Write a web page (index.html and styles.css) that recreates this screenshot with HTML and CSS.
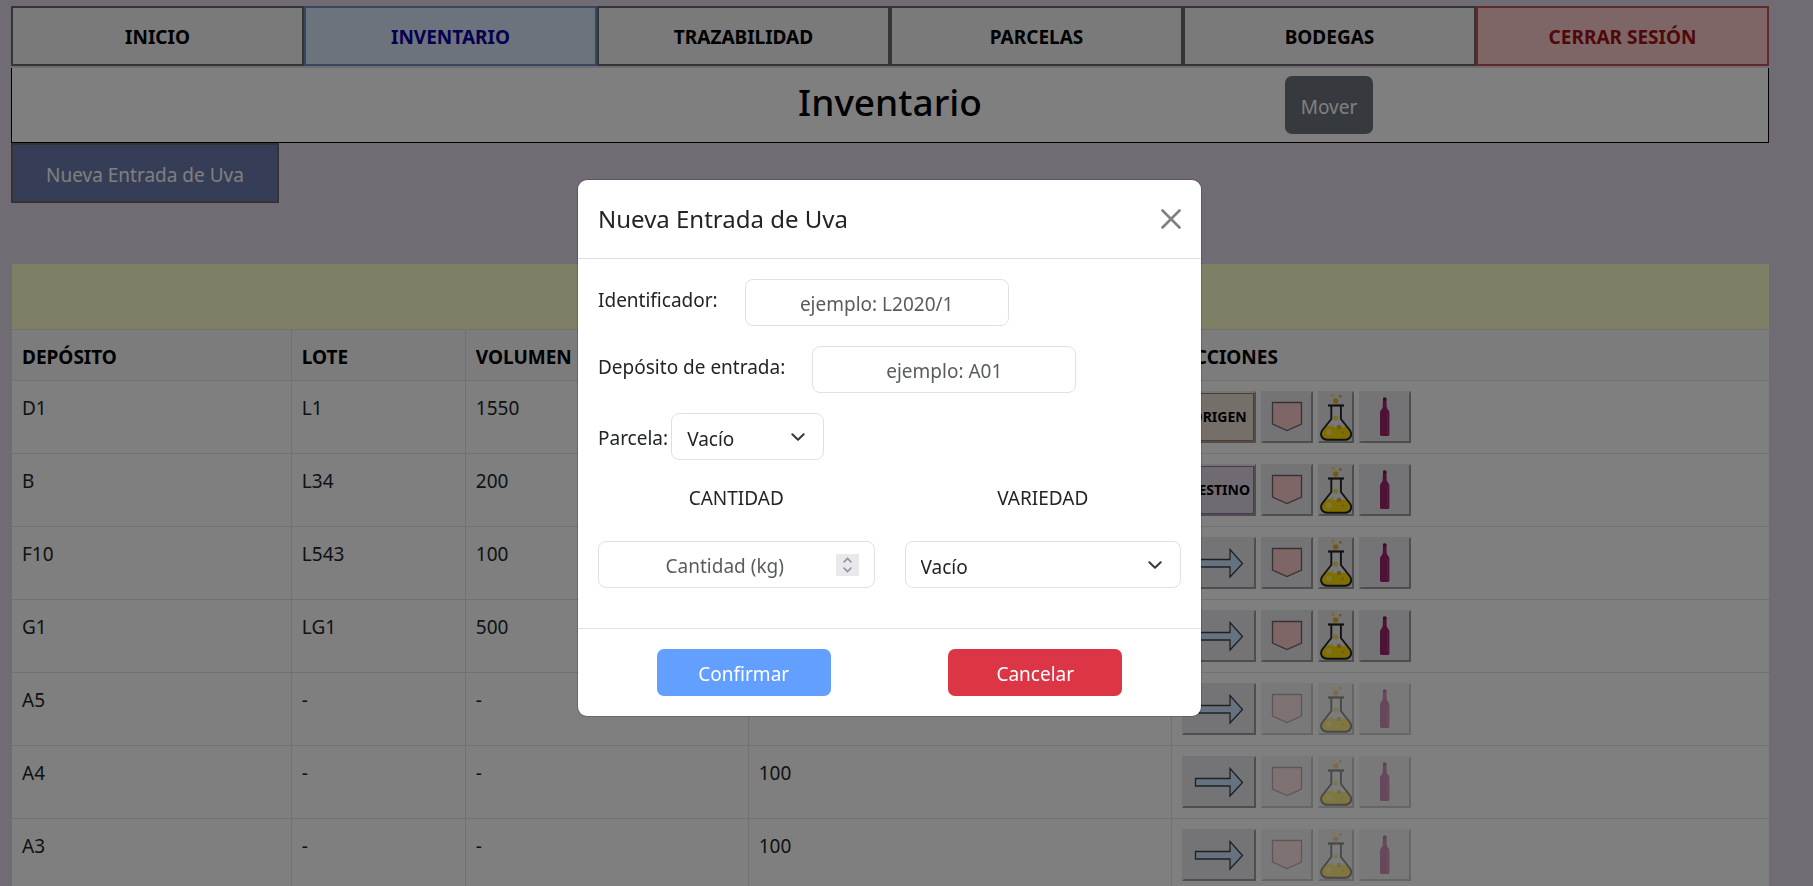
FILE: index.html
```html
<!DOCTYPE html>
<html lang="es">
<head>
<meta charset="utf-8">
<title>Inventario</title>
<link rel="stylesheet" href="styles.css">
</head>
<body>
<svg class="sprite" aria-hidden="true">
  <symbol id="arrow" viewBox="0 0 70 48">
    <path d="M11.500 20.500H46V10.500L58.500 24.500 46 38V28H11.500Z" fill="#cce5ff" stroke="#3c4248" stroke-width="1.300"/>
  </symbol>
  <symbol id="plot" viewBox="0 0 48 48">
    <path d="M9.500 9.500H38.500V31L24 37.500 9.500 31Z" fill="#ffcccc" stroke="#6e6668" stroke-width="1.300"/>
  </symbol>
  <symbol id="flask" viewBox="0 0 32 48">
    <path d="M11.700 13V26L2.600 37.500C0 42 2.500 46.700 7 46.700H25.500C30 46.700 32.300 42 29.700 37.500L20.600 26V13" fill="#f2f2f5"/>
    <path d="M5 34.500Q9 31.500 13 33.500T19.500 34.500 27.500 34L29.700 37.500C32 42 30 46.300 25.500 46.300H7C2.500 46.300 0 42 2.600 37.500Z" fill="#ffdf00"/>
    <circle cx="13" cy="2.300" r="2" fill="#f2e263"/>
    <circle cx="20.300" cy="3.300" r="1.500" fill="#f0b030"/>
    <circle cx="15.700" cy="8" r="2.700" fill="#efae28"/>
    <circle cx="15.700" cy="25" r="2.600" fill="#eedf58"/>
    <circle cx="12.300" cy="32.500" r="1.500" fill="#f3e880"/>
    <circle cx="19" cy="34" r="2.300" fill="#e8a83a"/>
    <circle cx="9" cy="39.300" r="2.900" fill="#ffef62"/>
    <circle cx="22.700" cy="39.700" r="1.100" fill="#e2ac20"/>
    <path d="M8 12.500H24" stroke="#242424" stroke-width="2.200"/>
    <path d="M11.300 13V26L2.200 37.500C-.6 42 2.200 46.700 7 46.700H25.500C30 46.700 32.800 42 30 37.500L20.900 26V13" fill="none" stroke="#242424" stroke-width="1.900"/>
  </symbol>
  <symbol id="bottle" viewBox="0 0 48 48">
    <path d="M22 5.300Q22 4.600 23.700 4.600T25.400 5.300L25.700 14C25.900 16.500 28.400 17 28.400 19.500V41.500Q28.400 43 26.500 43H21Q19 43 19 41.500V19.500C19 17 21.500 16.500 21.700 14Z" fill="#9e246e"/>
    <path d="M22 5.300Q22 4.600 23.700 4.600T25.400 5.300V7.500H22Z" fill="#6c1a4a"/>
    <path d="M26.700 20V41" stroke="#b04a88" stroke-width=".8"/>
  </symbol>
</svg>

<div class="page">
  <nav class="nav">
    <a class="nav-item" href="#inicio">INICIO</a>
    <a class="nav-item nav-active" href="#inventario">INVENTARIO</a>
    <a class="nav-item" href="#trazabilidad">TRAZABILIDAD</a>
    <a class="nav-item" href="#parcelas">PARCELAS</a>
    <a class="nav-item" href="#bodegas">BODEGAS</a>
    <a class="nav-item nav-exit" href="#salir">CERRAR SESIÓN</a>
  </nav>
  <header class="titlebar">
    <h1 class="title">Inventario</h1>
    <button class="move" type="button">Mover</button>
  </header>
  <button class="new-entry" type="button">Nueva Entrada de Uva</button>

  <div class="stock-wrap">
  <table class="stock">
    <colgroup><col class="c1"><col class="c2"><col class="c3"><col class="c4"><col class="c5"></colgroup>
    <thead>
      <tr class="band"><td colspan="5"></td></tr>
      <tr><th>DEPÓSITO</th><th>LOTE</th><th>VOLUMEN</th><th></th><th>ACCIONES</th></tr>
    </thead>
    <tbody>
      <tr><td>D1</td><td>L1</td><td>1550</td><td></td><td class="cell-actions"><div class="actions"><button class="act wide origin" type="button">ORIGEN</button><button class="act" type="button" aria-label="Parcela"><svg><use href="#plot"/></svg></button><button class="act slim" type="button" aria-label="Análisis"><svg><use href="#flask"/></svg></button><button class="act" type="button" aria-label="Embotellar"><svg><use href="#bottle"/></svg></button></div></td></tr>
      <tr><td>B</td><td>L34</td><td>200</td><td></td><td class="cell-actions"><div class="actions"><button class="act wide target" type="button">DESTINO</button><button class="act" type="button" aria-label="Parcela"><svg><use href="#plot"/></svg></button><button class="act slim" type="button" aria-label="Análisis"><svg><use href="#flask"/></svg></button><button class="act" type="button" aria-label="Embotellar"><svg><use href="#bottle"/></svg></button></div></td></tr>
      <tr><td>F10</td><td>L543</td><td>100</td><td></td><td class="cell-actions"><div class="actions"><button class="act wide" type="button" aria-label="Mover"><svg><use href="#arrow"/></svg></button><button class="act" type="button" aria-label="Parcela"><svg><use href="#plot"/></svg></button><button class="act slim" type="button" aria-label="Análisis"><svg><use href="#flask"/></svg></button><button class="act" type="button" aria-label="Embotellar"><svg><use href="#bottle"/></svg></button></div></td></tr>
      <tr><td>G1</td><td>LG1</td><td>500</td><td></td><td class="cell-actions"><div class="actions"><button class="act wide" type="button" aria-label="Mover"><svg><use href="#arrow"/></svg></button><button class="act" type="button" aria-label="Parcela"><svg><use href="#plot"/></svg></button><button class="act slim" type="button" aria-label="Análisis"><svg><use href="#flask"/></svg></button><button class="act" type="button" aria-label="Embotellar"><svg><use href="#bottle"/></svg></button></div></td></tr>
      <tr><td>A5</td><td>-</td><td>-</td><td></td><td class="cell-actions"><div class="actions"><button class="act wide" type="button" aria-label="Mover"><svg><use href="#arrow"/></svg></button><button class="act" type="button" disabled aria-label="Parcela"><svg><use href="#plot"/></svg></button><button class="act slim" type="button" disabled aria-label="Análisis"><svg><use href="#flask"/></svg></button><button class="act" type="button" disabled aria-label="Embotellar"><svg><use href="#bottle"/></svg></button></div></td></tr>
      <tr><td>A4</td><td>-</td><td>-</td><td>100</td><td class="cell-actions"><div class="actions"><button class="act wide" type="button" aria-label="Mover"><svg><use href="#arrow"/></svg></button><button class="act" type="button" disabled aria-label="Parcela"><svg><use href="#plot"/></svg></button><button class="act slim" type="button" disabled aria-label="Análisis"><svg><use href="#flask"/></svg></button><button class="act" type="button" disabled aria-label="Embotellar"><svg><use href="#bottle"/></svg></button></div></td></tr>
      <tr><td>A3</td><td>-</td><td>-</td><td>100</td><td class="cell-actions"><div class="actions"><button class="act wide" type="button" aria-label="Mover"><svg><use href="#arrow"/></svg></button><button class="act" type="button" disabled aria-label="Parcela"><svg><use href="#plot"/></svg></button><button class="act slim" type="button" disabled aria-label="Análisis"><svg><use href="#flask"/></svg></button><button class="act" type="button" disabled aria-label="Embotellar"><svg><use href="#bottle"/></svg></button></div></td></tr>
    </tbody>
  </table>
  </div>
</div>

<div class="backdrop">
  <form class="modal" role="dialog" aria-modal="true" aria-labelledby="modal-title">
    <div class="modal-head">
      <h2 class="modal-title" id="modal-title">Nueva Entrada de Uva</h2>
      <button class="close" type="button" aria-label="Cerrar"><svg viewBox="0 0 20 20"><path d="M1.500 1.500 18.500 18.500M18.500 1.500 1.500 18.500" fill="none" stroke="#808080" stroke-width="2.600" stroke-linecap="round"/></svg></button>
    </div>
    <div class="modal-body">
      <div class="field">
        <label for="ident">Identificador:</label>
        <input class="control text" id="ident" type="text" placeholder="ejemplo: L2020/1">
      </div>
      <div class="field">
        <label for="depo">Depósito de entrada:</label>
        <input class="control text" id="depo" type="text" placeholder="ejemplo: A01">
      </div>
      <div class="field field-tight">
        <label for="parcela">Parcela:</label>
        <div class="pick pick-small">
          <select class="control" id="parcela"><option>Vacío</option></select>
          <svg class="chevron" viewBox="0 0 14 8"><path d="M1.300 1.200 7 6.800 12.700 1.200" fill="none" stroke="#343a40" stroke-width="2" stroke-linecap="round" stroke-linejoin="round"/></svg>
        </div>
      </div>
      <div class="pair">
        <label for="cantidad">CANTIDAD</label>
        <label for="variedad">VARIEDAD</label>
        <div class="pick">
          <input class="control number" id="cantidad" type="number" placeholder="Cantidad (kg)">
          <svg class="spinner" viewBox="0 0 23 22"><path d="M0 0H23V22H0Z" fill="#e9e9ed"/><path d="M8 8 11.500 4.500 15 8M8 14 11.500 17.500 15 14" fill="none" stroke="#8f8f9d" stroke-width="1.600" stroke-linecap="round"/></svg>
        </div>
        <div class="pick">
          <select class="control" id="variedad"><option>Vacío</option></select>
          <svg class="chevron" viewBox="0 0 14 8"><path d="M1.300 1.200 7 6.800 12.700 1.200" fill="none" stroke="#343a40" stroke-width="2" stroke-linecap="round" stroke-linejoin="round"/></svg>
        </div>
      </div>
    </div>
    <div class="modal-foot">
      <button class="btn confirm" type="button">Confirmar</button>
      <button class="btn cancel" type="button">Cancelar</button>
    </div>
  </form>
</div>
</body>
</html>
```
FILE: styles.css
```css
* { box-sizing: border-box; }

body {
  margin: 0;
  background: #e2d7e6;
  color: #212529;
  font-family: "Noto Sans", "Open Sans", sans-serif;
  font-size: 19px;
  line-height: 30px;
  overflow: hidden;
}

button, input, select { font: inherit; color: inherit; }

.sprite { display: none; }

.page { padding: 6px 44px 0 11px; }

.nav {
  display: grid;
  grid-template-columns: repeat(6, 1fr);
}
.nav-item {
  padding: 14px 8px 12px;
  border: 2px solid #6a6a6a;
  background: #f5f5f5;
  color: #000;
  font-weight: 700;
  text-align: center;
  text-decoration: none;
}
.nav-active { border-color: #6c8fc0; background: #dae7fa; color: #0a00a0; }
.nav-exit { border-color: #c05454; background: #faccca; color: #a01014; }

.titlebar {
  display: grid;
  grid-template-columns: 3fr 2fr 2fr 1fr;
  align-items: start;
  margin-top: 2px;
  padding: 8px 0;
  border: 1px solid #000;
  border-top: 0;
  background: #fff;
}
.title {
  grid-column: 2;
  margin: 0;
  color: #000;
  font-size: 37px;
  font-weight: 500;
  line-height: 52px;
  text-align: center;
}
.move {
  justify-self: center;
  padding: 16px 16px 12px;
  border: 0;
  border-radius: 7px;
  background: #6c757d;
  color: #fff;
}

.new-entry {
  display: block;
  padding: 15px 33px 11px;
  border: 2px solid #666;
  background: #6a7cac;
  color: #fff;
}

.stock-wrap { padding: 61px 0 0 1px; }
.stock {
  width: 100%;
  border-collapse: collapse;
  table-layout: fixed;
  background: #fff;
}
.c1 { width: 15.9%; }
.c2 { width: 9.9%; }
.c3 { width: 16.1%; }
.c4 { width: 24.1%; }
.c5 { width: 34%; }
.stock td, .stock th {
  padding: 12px 10px 8px;
  border: 1px solid #dee2e6;
  text-align: left;
  vertical-align: top;
}
.stock .cell-actions { padding: 10px; }
.stock td:first-child, .stock th:first-child { border-left: 0; }
.stock td:last-child, .stock th:last-child { border-right: 0; }
.stock th { background: #f8f8f8; color: #000; }
.stock .band td { height: 65px; border-top: 0; background: #ffffcc; }

.actions { display: flex; gap: 5px; }
.act {
  display: flex;
  align-items: center;
  justify-content: center;
  width: 52px;
  height: 52px;
  padding: 0;
  border: 2px solid;
  border-color: #e9e9ec #9c9c9c #9c9c9c #e9e9ec;
  background: #e9e9ed;
}
.act svg { display: block; width: 100%; height: 100%; }
.act:disabled { opacity: .5; }
.wide { width: 74px; }
.slim { width: 36px; }
.origin, .target { color: #000; font-size: 14px; font-weight: 700; }
.origin { background: #e9dfd0; box-shadow: inset 0 0 0 1px #a5795c; }
.target { background: #e1d5e7; box-shadow: inset 0 0 0 1px #9673a6; }

.backdrop {
  position: fixed;
  inset: 0;
  padding: 180px 34px 0 0;
  background: rgba(0, 0, 0, .5);
}
.modal {
  max-width: 623px;
  margin: 0 auto;
  border-radius: 9px;
  background: #fff;
  box-shadow: 0 0 0 1px rgba(0, 0, 0, .18);
}
.modal-head {
  display: flex;
  align-items: center;
  justify-content: space-between;
  padding: 20px;
  border-bottom: 1px solid #dee2e6;
}
.modal-title { margin: 0; font-size: 24px; font-weight: 400; line-height: 38px; }
.close { padding: 0; border: 0; background: none; }
.close svg { display: block; width: 20px; height: 20px; }

.modal-body {
  display: grid;
  gap: 20px;
  padding: 20px 20px 40px;
}
.field { display: flex; align-items: start; gap: 27px; }
.field label { padding-top: 6px; }
.field-tight { gap: 3px; }
.field-tight label { padding-top: 10px; }

.control {
  display: block;
  width: 100%;
  height: 47px;
  padding: 10px 15px 7px;
  border: 1px solid #dee2e6;
  border-radius: 8px;
  background: #fff;
  appearance: none;
}
.control::placeholder { color: #595c5f; opacity: 1; }
.text { width: 264px; text-align: center; }
.number { padding-right: 38px; text-align: center; appearance: textfield; }
.number::-webkit-inner-spin-button { display: none; }

.pick { position: relative; }
.pick-small { width: 153px; }
.chevron {
  position: absolute;
  top: 20px;
  right: 19px;
  width: 14px;
  height: 8px;
  pointer-events: none;
}
.spinner {
  position: absolute;
  top: 13px;
  right: 16px;
  width: 23px;
  height: 22px;
}

.pair {
  display: grid;
  grid-template-columns: 1fr 1fr;
  gap: 28px 30px;
  padding-top: 3px;
}
.pair label { text-align: center; }

.modal-foot {
  display: flex;
  justify-content: space-around;
  padding: 20px;
  border-top: 1px solid #dee2e6;
}
.btn {
  width: 174px;
  padding: 10px 0 7px;
  border: 0;
  border-radius: 7px;
  color: #fff;
}
.confirm { background: #639fff; }
.cancel { background: #dc3545; }
```
